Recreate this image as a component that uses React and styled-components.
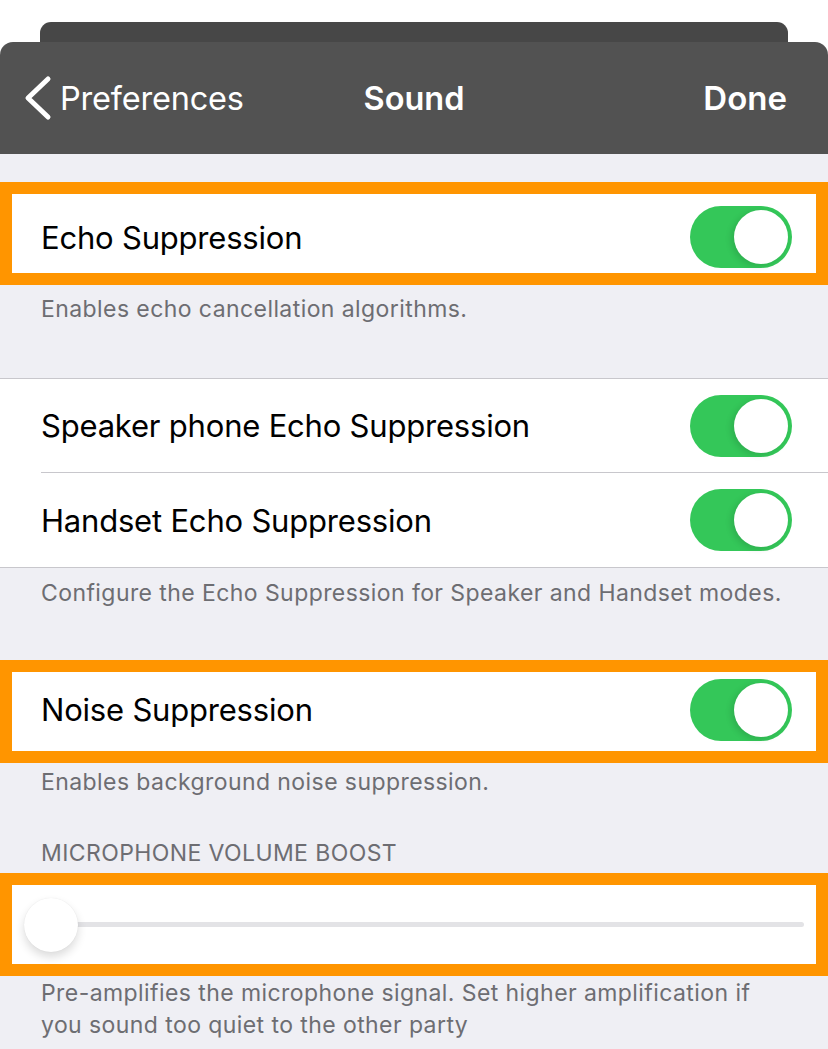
import React from 'react';
import styled, { createGlobalStyle } from 'styled-components';

const GlobalStyle = createGlobalStyle`
  html, body {
    margin: 0;
    padding: 0;
    background: #ffffff;
  }
  body {
    font-family: Inter, "Liberation Sans", sans-serif;
    -webkit-font-smoothing: antialiased;
  }
`;

const Page = styled.div`
  width: 828px;
  min-height: 1049px;
  padding-top: 22px;
  box-sizing: border-box;
  background: #ffffff;
  display: flex;
  flex-direction: column;
`;

const BackSheet = styled.div`
  height: 20px;
  margin: 0 40px;
  background: #474747;
  border-radius: 11px 11px 0 0;
`;

const NavBar = styled.div`
  height: 112px;
  background: #525252;
  border-radius: 13px 13px 0 0;
  display: flex;
  align-items: center;
  justify-content: space-between;
  padding: 0 41px 0 24px;
  color: #ffffff;
  position: relative;
`;

const BackButton = styled.div`
  display: flex;
  align-items: center;
  gap: 8px;
  font-size: 32.5px;
  font-weight: 400;
  letter-spacing: -0.2px;
`;

const NavTitle = styled.div`
  position: absolute;
  left: 0;
  right: 0;
  text-align: center;
  font-size: 32.5px;
  font-weight: 600;
  pointer-events: none;
`;

const DoneButton = styled.div`
  font-size: 33px;
  font-weight: 600;
`;

const Content = styled.div`
  flex: 1;
  background: #efeff4;
  padding-top: 28px;
  display: flex;
  flex-direction: column;
`;

const Highlight = styled.div`
  border: 12px solid #ff9500;
  height: 103px;
  box-sizing: border-box;
  background: #ffffff;
  display: flex;
  align-items: center;
  padding: ${p => (p.$slider ? '0 12px' : `${p.$pt || 0}px 24px ${p.$pb || 0}px 29px`)};
  margin-top: ${p => p.$mt || 0}px;
`;

const Group = styled.div`
  background: #ffffff;
  border-top: 1px solid #c8c7cc;
  border-bottom: 1px solid #c8c7cc;
  margin-top: ${p => p.$mt || 0}px;
`;

const Row = styled.div`
  height: ${p => p.$h || 94}px;
  display: flex;
  align-items: center;
  padding: 0 36px 0 41px;
  box-sizing: border-box;
`;

const Separator = styled.div`
  height: 1px;
  margin-left: 41px;
  background: #c8c7cc;
`;

const Label = styled.div`
  flex: 1;
  font-size: 31px;
  color: #000000;
  letter-spacing: -0.2px;
`;

const Footer = styled.div`
  font-size: 23px;
  line-height: 32px;
  letter-spacing: 0.42px;
  color: #6d6d72;
  padding: 0 41px;
  margin-top: ${p => p.$mt || 0}px;
`;

const Header = styled.div`
  font-size: 23px;
  line-height: 32px;
  letter-spacing: 0.4px;
  color: #6d6d72;
  text-transform: uppercase;
  padding: 0 41px;
  margin-top: ${p => p.$mt || 0}px;
  margin-bottom: 4px;
`;

const SwitchTrack = styled.div`
  width: 102px;
  height: 62px;
  border-radius: 31px;
  background: #34c759;
  padding: 4px;
  box-sizing: border-box;
  display: flex;
  justify-content: flex-end;
  flex-shrink: 0;
`;

const SwitchKnob = styled.div`
  width: 54px;
  height: 54px;
  border-radius: 50%;
  background: #ffffff;
  box-shadow: -3px 2px 6px rgba(0, 0, 0, 0.12);
`;

const SliderWrap = styled.div`
  flex: 1;
  display: flex;
  align-items: center;
  position: relative;
  height: 54px;
`;

const SliderTrack = styled.div`
  flex: 1;
  height: 5px;
  border-radius: 3px;
  background: #e3e3e6;
`;

const SliderThumb = styled.div`
  position: absolute;
  left: 0;
  top: 0;
  width: 54px;
  height: 54px;
  border-radius: 50%;
  background: #ffffff;
  box-shadow: 0 5px 10px rgba(0, 0, 0, 0.14), 0 0 1px rgba(0, 0, 0, 0.1);
`;

function Switch() {
  return (
    <SwitchTrack>
      <SwitchKnob />
    </SwitchTrack>
  );
}

function Chevron() {
  return (
    <svg width="28" height="46" viewBox="0 0 28 46">
      <path
        d="M24 4 L4 23 L24 42"
        fill="none"
        stroke="#ffffff"
        strokeWidth="5"
        strokeLinecap="round"
        strokeLinejoin="round"
      />
    </svg>
  );
}

export default function App() {
  return (
    <Page>
      <GlobalStyle />
      <BackSheet />
      <NavBar>
        <BackButton>
          <Chevron />
          Preferences
        </BackButton>
        <NavTitle>Sound</NavTitle>
        <DoneButton>Done</DoneButton>
      </NavBar>

      <Content>
        <Highlight $pt={7}>
          <Label>Echo Suppression</Label>
          <Switch />
        </Highlight>
        <Footer $mt={8}>Enables echo cancellation algorithms.</Footer>

        <Group $mt={53}>
          <Row $h={93}>
            <Label>Speaker phone Echo Suppression</Label>
            <Switch />
          </Row>
          <Separator />
          <Row>
            <Label>Handset Echo Suppression</Label>
            <Switch />
          </Row>
        </Group>
        <Footer $mt={9}>Configure the Echo Suppression for Speaker and Handset modes.</Footer>

        <Highlight $mt={51} $pb={4}>
          <Label>Noise Suppression</Label>
          <Switch />
        </Highlight>
        <Footer $mt={3}>Enables background noise suppression.</Footer>

        <Header $mt={39}>Microphone Volume Boost</Header>
        <Highlight $slider>
          <SliderWrap>
            <SliderTrack />
            <SliderThumb />
          </SliderWrap>
        </Highlight>
        <Footer $mt={1}>
          Pre-amplifies the microphone signal. Set higher amplification if
          <br />
          you sound too quiet to the other party
        </Footer>
      </Content>
    </Page>
  );
}
